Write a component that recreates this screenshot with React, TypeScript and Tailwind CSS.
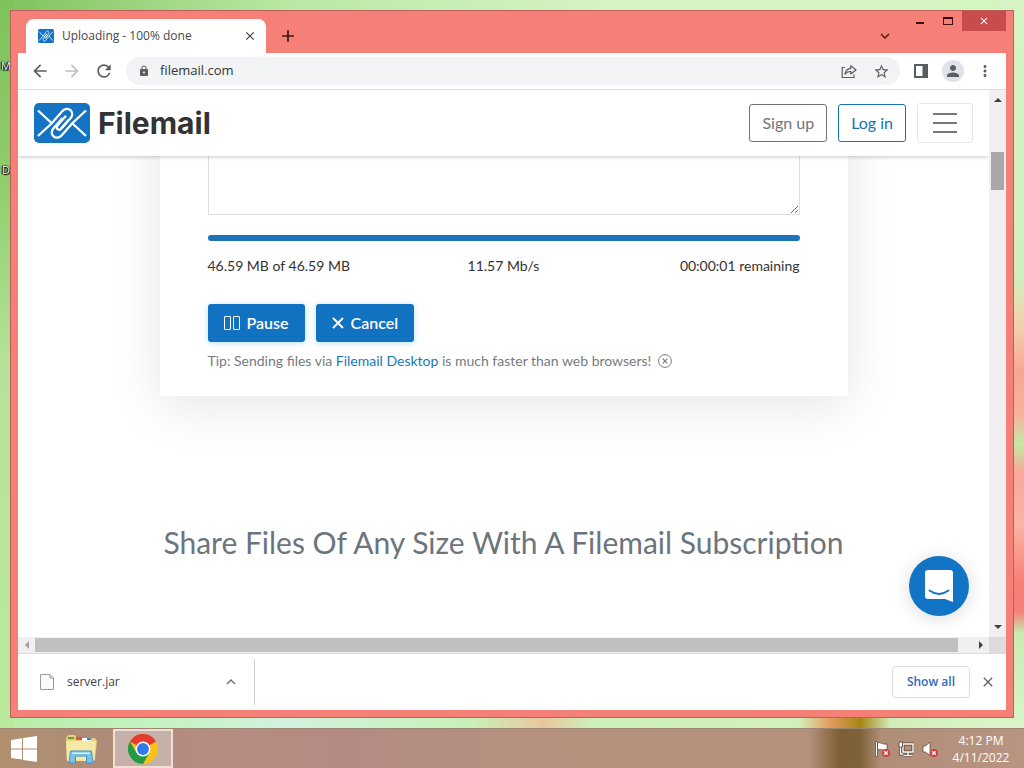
import React from "react";
import {
  MdArrowBack,
  MdArrowForward,
  MdRefresh,
  MdLock,
  MdStarOutline,
  MdMoreVert,
  MdPerson,
  MdClose,
  MdAdd,
  MdKeyboardArrowUp,
  MdKeyboardArrowDown,
} from "react-icons/md";

function FilemailMark({ className }: { className: string }) {
  return (
    <svg viewBox="0 0 56 40" preserveAspectRatio="none" className={className} aria-hidden="true">
      <rect width="56" height="40" rx="5" fill="#1573c4" />
      <g fill="none" stroke="#fff" strokeWidth="2.300" strokeLinejoin="round">
        <path d="M4 7.500 L17.500 20" />
        <path d="M4 33 L17.500 20.500 L28 8.500 C30.500 5.500 34 5 36.500 7.200 C39 9.500 38.500 12.800 36.500 15.200 L27.500 25.500 C26 27.200 24.500 27 23.500 26 C22.300 25 22.500 23.500 23.700 22.200 L32 12.800" />
        <path d="M52 33 L38.500 20.500" />
        <path d="M52 7.500 L38.500 20 L28 32 C25.500 35 22 35.500 19.500 33.300 C17 31 17.500 27.700 19.500 25.300 L28.500 15" />
        <path d="M27 25.500 L34.500 17" />
      </g>
    </svg>
  );
}

function TitleBar() {
  return (
    <div className="flex h-[42px] items-start bg-[#f58078]">
      <div className="mt-2 ml-2 flex h-[34px] w-60 items-center rounded-t-lg bg-white pr-2 pl-3">
        <FilemailMark className="h-[14px] w-4 shrink-0" />
        <span className="ml-2 flex-1 truncate text-[12px] text-[#45494d]">Uploading - 100% done</span>
        <button aria-label="Close tab" className="flex size-4 items-center justify-center text-[#3c4043]">
          <MdClose className="size-[14px]" />
        </button>
      </div>
      <button aria-label="New tab" className="mt-[15px] ml-3 text-[#3a1513]">
        <MdAdd className="size-5" />
      </button>
      <div className="flex-1" />
      <button aria-label="Search tabs" className="mt-4 mr-3 text-[#5c1512]">
        <MdKeyboardArrowDown className="size-[18px]" />
      </button>
      <button aria-label="Minimize" className="flex h-5 w-7 items-center justify-center">
        <span className="mt-1 h-[2px] w-2 bg-[#3d100e]" />
      </button>
      <button aria-label="Maximize" className="flex h-5 w-7 items-center justify-center">
        <span className="h-2 w-[10px] border border-t-2 border-[#3d100e]" />
      </button>
      <button aria-label="Close window" className="flex h-5 w-11 items-center justify-center bg-[#c84c4c] text-white">
        <MdClose className="size-3" />
      </button>
    </div>
  );
}

function Toolbar() {
  return (
    <div className="flex h-[37px] items-center border-b border-[#dcdde0] bg-white pr-3 pl-3 text-[#5a5e63]">
      <button aria-label="Back">
        <MdArrowBack className="size-5" />
      </button>
      <button aria-label="Forward" className="ml-3 text-[#bfc1c4]">
        <MdArrowForward className="size-5" />
      </button>
      <button aria-label="Reload" className="ml-3">
        <MdRefresh className="size-5" />
      </button>
      <div className="ml-3 flex h-7 flex-1 items-center rounded-full bg-[#f1f3f4] pr-[10px] pl-3">
        <MdLock className="size-3 shrink-0" />
        <input
          aria-label="Address"
          defaultValue="filemail.com"
          className="ml-[10px] min-w-0 flex-1 bg-transparent text-[13px] text-[#303438] outline-none"
        />
        <button aria-label="Share" className="mr-4">
          <svg viewBox="0 0 16 16" className="size-4" fill="none" stroke="currentColor" strokeWidth="1.2" aria-hidden="true">
            <path d="M4 4.500 H1.200 V14.500 H13 V11.500" />
            <path d="M4 11 C4.500 7.500 6.500 5.600 9.800 5.400 V2.600 L15 7 L9.800 11 V8.300 C7 8.300 5.500 9.200 4 11 Z" strokeLinejoin="round" />
          </svg>
        </button>
        <button aria-label="Bookmark">
          <MdStarOutline className="size-[17px]" />
        </button>
      </div>
      <button aria-label="Side panel" className="ml-[14px]">
        <svg viewBox="0 0 14 14" className="size-[14px]" aria-hidden="true">
          <path d="M0 0 H14 V14 H0 Z M2 2 V12 H8.500 V2 Z" fill="currentColor" fillRule="evenodd" />
        </svg>
      </button>
      <button aria-label="Profile" className="ml-[14px] flex size-[22px] items-center justify-center rounded-full bg-[#dfe2ea]">
        <MdPerson className="size-[18px]" />
      </button>
      <button aria-label="Menu" className="ml-3">
        <MdMoreVert className="size-[18px]" />
      </button>
    </div>
  );
}

function SiteHeader() {
  return (
    <header className="relative z-10 flex h-[66px] shrink-0 items-center bg-white px-4 shadow-[0_1px_4px_rgba(0,0,0,0.22)]">
      <a href="#home" className="flex items-center">
        <FilemailMark className="h-10 w-14" />
        <span className="ml-2 font-['Inter',sans-serif] text-[30px] leading-10 font-bold text-[#333335]">Filemail</span>
      </a>
      <div className="flex-1" />
      <button className="h-[38px] rounded-[3px] border border-[#6c757d] px-3 text-[16px] text-[#6c757d]">Sign up</button>
      <button className="ml-[11px] h-[38px] rounded-[3px] border border-[#1573b5] px-3 text-[16px] text-[#1573b5]">Log in</button>
      <button aria-label="Open menu" className="ml-[11px] flex h-10 w-14 flex-col items-center justify-center gap-[7px] rounded-[3px] border border-[#e6e6e6]">
        <span className="h-[2px] w-6 bg-[#777]" />
        <span className="h-[2px] w-6 bg-[#777]" />
        <span className="h-[2px] w-6 bg-[#777]" />
      </button>
    </header>
  );
}

function UploadCard() {
  return (
    <section className="mx-auto -mt-20 w-full max-w-[688px] bg-white px-12 pt-10 pb-6 shadow-[0_10px_50px_rgba(0,0,0,0.1)]">
      <textarea aria-label="Message" className="block h-[99px] w-full resize border border-[#dedede] bg-white p-3 text-[14px] outline-none" />
      <div role="progressbar" aria-label="Upload" aria-valuenow={100} className="mt-5 h-[6px] rounded-full bg-[#1c73ba]" />
      <div className="mt-[9px] grid grid-cols-3 text-[14px] leading-8 text-[#333]">
        <span>46.59 MB of 46.59 MB</span>
        <span className="text-center">11.57 Mb/s</span>
        <span className="text-right">00:00:01 remaining</span>
      </div>
      <div className="mt-[22px] flex gap-[11px] text-[16px] font-semibold text-white">
        <button className="flex h-[38px] items-center rounded-[3px] bg-[#1272c2] px-4 shadow-[0_1px_6px_rgba(0,150,230,0.3)]">
          <span className="mr-[7px] flex gap-[2px]">
            <span className="h-[14px] w-[7px] rounded-[1px] border border-white" />
            <span className="h-[14px] w-[7px] rounded-[1px] border border-white" />
          </span>
          Pause
        </button>
        <button className="flex h-[38px] items-center rounded-[3px] bg-[#1272c2] px-4 shadow-[0_1px_6px_rgba(0,150,230,0.3)]">
          <svg viewBox="0 0 12 12" className="mr-[7px] size-3" stroke="#fff" strokeWidth="1.800" aria-hidden="true">
            <path d="M1 1 L11 11 M11 1 L1 11" />
          </svg>
          Cancel
        </button>
      </div>
      <p className="mt-2 flex items-center text-[14px] leading-[22px] text-[#757c80]">
        <span>
          Tip: Sending files via{" "}
          <a href="#desktop" className="text-[#1779ba]">Filemail Desktop</a> is much faster than web browsers!
        </span>
        <button aria-label="Dismiss tip" className="ml-[7px]">
          <svg viewBox="0 0 14 14" className="size-[14px]" fill="none" stroke="currentColor" aria-hidden="true">
            <circle cx="7" cy="7" r="6.400" />
            <path d="M4.700 4.700 L9.300 9.300 M9.300 4.700 L4.700 9.300" strokeWidth="1.200" />
          </svg>
        </button>
      </p>
    </section>
  );
}

function VerticalScroll() {
  return (
    <div className="flex w-[17px] shrink-0 flex-col items-center bg-[#f0f0f1] py-2">
      <svg viewBox="0 0 8 4" className="h-1 w-2" aria-hidden="true"><path d="M0 4 L4 0 L8 4 Z" fill="#404040" /></svg>
      <div className="mt-[50px] h-[38px] w-[13px] bg-[#a8a8a8]" />
      <div className="flex-1" />
      <svg viewBox="0 0 8 4" className="h-1 w-2" aria-hidden="true"><path d="M0 0 L4 4 L8 0 Z" fill="#404040" /></svg>
    </div>
  );
}

function HorizontalScroll() {
  return (
    <div className="flex h-[17px] shrink-0 border-b border-[#dcdcdc] bg-[#f0f0f1]">
      <div className="flex w-[17px] items-center justify-center">
        <svg viewBox="0 0 4 8" className="h-2 w-1" aria-hidden="true"><path d="M4 0 L0 4 L4 8 Z" fill="#a0a0a0" /></svg>
      </div>
      <div className="my-[1px] flex-1 bg-[#c0c0c0]" />
      <div className="flex w-[31px] items-center justify-end pr-[6px]">
        <svg viewBox="0 0 4 8" className="h-2 w-1" aria-hidden="true"><path d="M0 0 L4 4 L0 8 Z" fill="#404040" /></svg>
      </div>
      <div className="w-[17px] bg-[#dcdcdc]" />
    </div>
  );
}

function DownloadBar() {
  return (
    <div className="flex h-14 shrink-0 items-center bg-white pr-[10px] pl-[22px]">
      <div className="flex h-[46px] w-[215px] items-center border-r border-[#cfcfcf] pr-[14px]">
        <svg viewBox="0 0 14 16" className="h-4 w-[14px]" fill="#fafafa" stroke="#9a9a9a" aria-hidden="true">
          <path d="M0.500 0.500 H10 L13.500 4 V15.500 H0.500 Z M10 0.500 V4 H13.500" />
        </svg>
        <span className="ml-[13px] flex-1 text-[12px] text-[#404346]">server.jar</span>
        <button aria-label="Download options" className="text-[#6b6f73]">
          <MdKeyboardArrowUp className="size-[18px]" />
        </button>
      </div>
      <div className="flex-1" />
      <button className="h-8 rounded-[4px] border border-[#dadce0] px-[14px] text-[12px] font-semibold text-[#3369b5]">Show all</button>
      <button aria-label="Close downloads" className="ml-[10px] text-[#5f6368]">
        <MdClose className="size-4" />
      </button>
    </div>
  );
}

function RedX() {
  return (
    <>
      <circle cx="12" cy="12" r="4" fill="#d63c3c" />
      <path d="M10.200 10.200 L13.800 13.800 M13.800 10.200 L10.200 13.800" stroke="#fff" strokeWidth="1.300" />
    </>
  );
}

function Taskbar() {
  return (
    <div className="flex h-10 shrink-0 items-stretch border-t border-[#9b8575] bg-[linear-gradient(90deg,#b0906f_0%,#ae8b77_10%,#b58c80_19%,#b38b83_35%,#b6917f_55%,#b5917b_79%,#7d5f35_82%,#80623a_84%,#af8e77_86%,#b89482_100%)] pl-[10px]">
      <button aria-label="Start" className="flex items-center">
        <svg viewBox="0 0 28 26" className="h-[26px] w-7" fill="#fff" aria-hidden="true">
          <path d="M1 4 L12 2.300 V12.500 H1 Z M13 2.100 L27 0 V12.500 H13 Z M1 13.500 H12 V23.600 L1 22 Z M13 13.500 H27 V26 L13 23.900 Z" />
        </svg>
      </button>
      <button aria-label="File Explorer" className="ml-[26px] flex items-center">
        <svg viewBox="0 0 34 30" className="h-[30px] w-[34px]" aria-hidden="true">
          <path d="M2 4 L4 1 H11 L13 4 H31 L33 7 L31 26 H3 Z" fill="#e8ce72" />
          <path d="M4 3 H10 V5 H4 Z" fill="#59a050" />
          <path d="M12 3 H19 V6 H12 Z" fill="#d45a45" />
          <path d="M18 4 H27 V7 H18 Z" fill="#fff" />
          <path d="M23 4 H27 V6 H23 Z" fill="#3e87c8" />
          <path d="M2 7 H32 L30 27 H3 Z" fill="#f7e9a4" />
          <path d="M5 29 L6.500 17 H27.500 L29 29 H22.500 V22 H11.500 V29 Z" fill="#78c3ec" stroke="#4394cb" />
          <path d="M8 18.500 H26 V20 H8 Z" fill="#d5f0fc" />
        </svg>
      </button>
      <button aria-label="Google Chrome" className="ml-[15px] flex w-[60px] items-center justify-center border-2 border-[#f2ded2] bg-[#c6b1aa]">
        <svg viewBox="0 0 48 48" className="size-[30px]" aria-hidden="true">
          <circle cx="24" cy="24" r="24" fill="#fbc116" />
          <path d="M24 24 L3.200 12 A24 24 0 0 1 44.800 12 Z" fill="#e33b2e" />
          <path d="M3.200 12 A24 24 0 0 0 24 48 L34.400 30 L24 24 L13.600 30 Z" fill="#249a48" />
          <circle cx="24" cy="24" r="12" fill="#fff" />
          <circle cx="24" cy="24" r="9.500" fill="#2f7bea" />
        </svg>
      </button>
      <div className="flex-1" />
      <div className="flex items-center gap-2">
        <svg viewBox="0 0 16 16" className="size-4" aria-hidden="true">
          <path d="M1.500 0.500 H3.500 V15.500 H1.500 Z M3.500 2 C6 0.500 8 4 13 3 V9 C9 10 6.500 7.500 3.500 9 Z" fill="#fff" stroke="#55402f" strokeWidth="0.700" />
          <RedX />
        </svg>
        <svg viewBox="0 0 16 16" className="size-4" fill="none" aria-hidden="true">
          <path d="M5 3 H15 V11 H5 Z M10 11 V14 M6 14.500 H14 M2.500 6 V13 H5" stroke="#55402f" strokeWidth="3" />
          <path d="M5 3 H15 V11 H5 Z M10 11 V14 M6 14.500 H14 M2.500 6 V13 H5" stroke="#fff" strokeWidth="1.400" />
          <path d="M1 1 H4.500 V6 H1 Z" fill="#fff" stroke="#55402f" strokeWidth="0.800" />
        </svg>
        <svg viewBox="0 0 16 16" className="size-4" aria-hidden="true">
          <path d="M1 5 H3.500 L8 1 V14.500 L3.500 11 H1 Z" fill="#fff" stroke="#55402f" strokeWidth="0.700" />
          <RedX />
        </svg>
      </div>
      <div className="ml-[10px] flex w-[66px] flex-col items-center justify-center text-[12px] leading-[17px] text-white">
        <span>4:12 PM</span>
        <span>4/11/2022</span>
      </div>
      <div className="w-[10px]" />
    </div>
  );
}

export default function App() {
  return (
    <div className="flex h-screen flex-col overflow-hidden font-['Open_Sans','Noto_Sans',sans-serif]">
      <div className="relative flex min-h-0 flex-1 flex-col p-[10px] [background:linear-gradient(180deg,#d6f3c4_0%,#d0efbc_38%,#f3cfae_45%,#f7a695_51%,#f7b29e_57%,#c5e8a4_61%,#f8a799_65%,#fbb5a4_72%,#f77f76_80%,#f58178_84%,#c8ebb3_87%,#d9f5c9_100%)_right/24px_100%_no-repeat,linear-gradient(180deg,#7fc25c_0%,#8ccb68_22%,#b5e298_50%,#b9ea9c_100%)_left/14px_100%_no-repeat,linear-gradient(90deg,#b7eda6_0%,#c4f3c0_15%,#d3f1de_28%,#c8f1b8_46%,#e9c79e_53%,#cdf1b8_58%,#d2f0bb_78%,#e39d5f_81%,#a88516_84%,#d1eeb9_87%,#dbf7cb_100%)_bottom/100%_14px_no-repeat,linear-gradient(90deg,#7fc25c_0%,#9bd47d_13%,#b9e8a4_28%,#d7f3c4_60%,#d3f4bf_100%)]">
        <span className="absolute top-[58px] left-[1px] text-[11px] text-white [text-shadow:0_0_1px_#000,0_0_2px_#000,1px_1px_1px_#000,-1px_0_1px_#000]">M</span>
        <span className="absolute top-[162px] left-[2px] text-[11px] text-white [text-shadow:0_0_1px_#000,0_0_2px_#000,1px_1px_1px_#000,-1px_0_1px_#000]">D</span>
        <div className="relative flex min-h-0 flex-1 flex-col border border-[#b9605a] bg-[#f58078] px-[7px] pb-[7px]">
          <TitleBar />
          <Toolbar />
          <div className="flex min-h-0 flex-1">
            <main className="relative flex min-w-0 flex-1 flex-col overflow-hidden bg-white font-['Lato',sans-serif]">
              <SiteHeader />
              <UploadCard />
              <h2 className="mt-[126px] text-center text-[30px] leading-10 text-[#6c757d]">Share Files Of Any Size With A Filemail Subscription</h2>
              <button aria-label="Open chat" className="absolute right-5 bottom-[21px] flex size-[60px] items-center justify-center rounded-full bg-[#1174c5] shadow-[0_2px_18px_rgba(0,0,0,0.15)]">
                <svg viewBox="0 0 28 32" className="h-8 w-7" aria-hidden="true">
                  <path d="M3 0 H25 Q28 0 28 3 V32 Q24 30.500 20 29 H3 Q0 29 0 26 V3 Q0 0 3 0 Z" fill="#fff" />
                  <path d="M4.500 20.500 Q14 27.500 23.500 20.500" fill="none" stroke="#1174c5" strokeWidth="1.800" strokeLinecap="round" />
                </svg>
              </button>
            </main>
            <VerticalScroll />
          </div>
          <HorizontalScroll />
          <DownloadBar />
        </div>
      </div>
      <Taskbar />
    </div>
  );
}
